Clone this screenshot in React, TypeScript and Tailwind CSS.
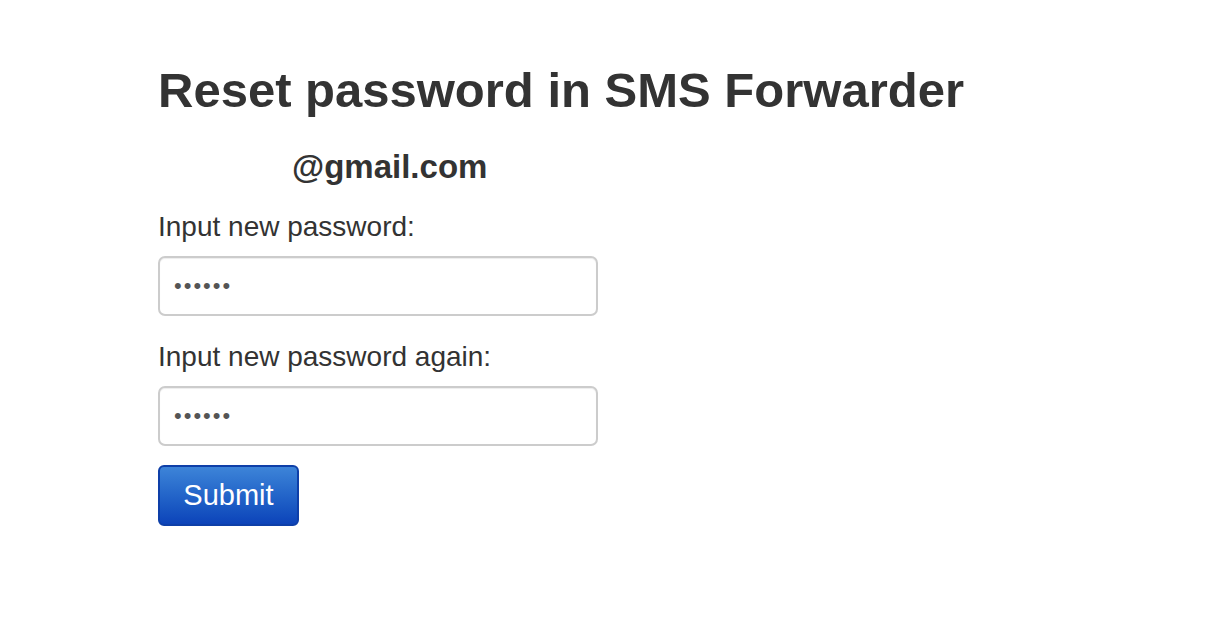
export default function App() {
  return (
    <div className="min-h-[638px] bg-white text-[#333333] font-['Liberation_Sans',Arial,sans-serif]">
      <div className="pl-[158px] pt-[58px]">
        <h1 className="text-[49px] font-bold leading-[64px]">Reset password in SMS Forwarder</h1>
        <h3 className="mt-[25px] pl-[134px] text-[33px] font-bold leading-[40px]">@gmail.com</h3>
        <form className="mt-[22px] flex flex-col">
          <label className="text-[28px] leading-[36px]">Input new password:</label>
          <input
            type="password"
            defaultValue="123456"
            className="mt-[11px] h-[60px] w-[440px] rounded-[7px] border-2 border-[#cccccc] px-[14px] text-[22px] tracking-[2px] text-[#555555] shadow-[inset_0_1px_1px_rgba(0,0,0,0.075)] outline-none"
          />
          <label className="mt-[23px] text-[28px] leading-[36px]">Input new password again:</label>
          <input
            type="password"
            defaultValue="123456"
            className="mt-[11px] h-[60px] w-[440px] rounded-[7px] border-2 border-[#cccccc] px-[14px] text-[22px] tracking-[2px] text-[#555555] shadow-[inset_0_1px_1px_rgba(0,0,0,0.075)] outline-none"
          />
          <button
            type="button"
            className="mt-[19px] h-[61px] w-[141px] rounded-[6px] border-2 border-[#0e3fa8] bg-gradient-to-b from-[#3d84d8] to-[#0d43b9] text-[29px] text-white"
          >
            Submit
          </button>
        </form>
      </div>
    </div>
  );
}
